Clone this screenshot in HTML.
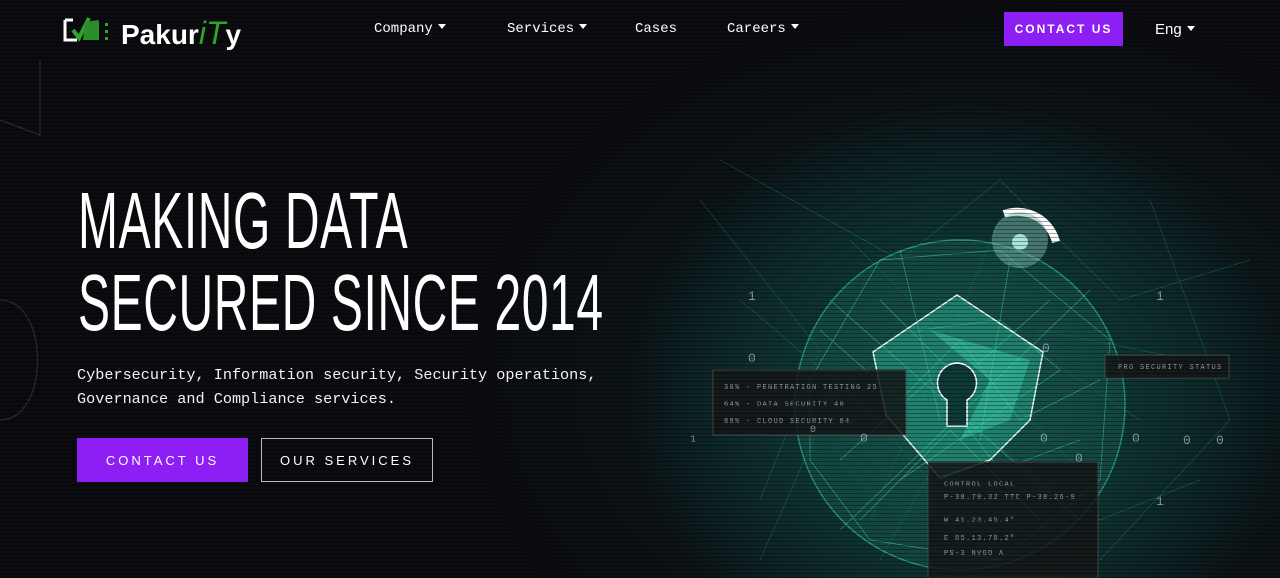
<!DOCTYPE html>
<html><head><meta charset="utf-8">
<style>
*{margin:0;padding:0;box-sizing:border-box}
body{width:1280px;height:578px;overflow:hidden;background:#0b0b10;font-family:"Liberation Sans",sans-serif;color:#fff;position:relative}
.bg{position:absolute;inset:0;background:
radial-gradient(ellipse 330px 300px at 960px 400px,#14504a 0%,#0e3532 50%,rgba(10,25,26,0) 100%),
radial-gradient(ellipse 650px 480px at 980px 380px,#0d2526 0%,rgba(11,11,16,0) 80%),#0b0b10}
.scan{position:absolute;inset:0;background:repeating-linear-gradient(0deg,rgba(0,0,0,.35) 0 1px,rgba(0,0,0,0) 1px 4px)}
.nav a{position:absolute;top:21px;font-family:"Liberation Mono",monospace;font-size:14px;color:#fff;text-decoration:none}
.car:after{content:"";display:inline-block;margin-left:5px;border-left:4px solid transparent;border-right:4px solid transparent;border-top:5px solid #fff;vertical-align:3px}
.btn{position:absolute;display:flex;align-items:center;justify-content:center;font-family:"Liberation Sans",sans-serif;font-weight:bold;letter-spacing:2.5px;color:#fff}
.h1{position:absolute;left:78px;font-size:80px;line-height:1;transform:scaleX(.6);transform-origin:left;white-space:nowrap;letter-spacing:1px}
.sub{position:absolute;left:77px;top:363px;font-family:"Liberation Mono",monospace;font-size:15.2px;line-height:24px;color:#f2f2f2}
</style></head><body>
<div class="bg"></div>
<svg width="1280" height="578" style="position:absolute;left:0;top:0">
<g stroke="#2fcfb0" stroke-opacity=".3" stroke-width=".7" fill="none">
<path d="M700 200L820 350L760 500M720 160L900 260L1000 180L1120 300L1250 260M880 560L960 420L1100 520L1200 480M800 420L960 300L1140 420M740 300L940 470L1040 330L1190 360M850 240L1080 470M1000 220L870 520M1150 200L1230 420L1100 560M760 560L840 380L1000 560"/>
</g>
<circle cx="960" cy="405" r="165" fill="#17574d" fill-opacity=".5" stroke="#3ad6b8" stroke-opacity=".55" stroke-width="1.5"/>
<g stroke="#4fe6c4" stroke-opacity=".5" stroke-width=".8" fill="none">
<path d="M820 330L900 400L960 340L1020 420L1100 380M840 460L930 380L1000 470L1080 440M880 300L960 380L1050 300M860 520L950 430L1040 520M900 250L940 420M1010 260L980 440M810 380L880 260L1000 250L1110 340L1100 480L1000 560L870 540L810 460ZM830 300L1080 520M1090 290L840 530M900 480L1060 370L1000 320L920 330"/>
</g>
<path d="M957 295L1043 352L1030 420L990 460L940 478L886 415L873 352Z" fill="#2fc9a4" fill-opacity=".4" stroke="#e8f8f2" stroke-width="1.5"/>
<path d="M930 330L990 380L960 440L1010 420L1030 360Z" fill="#4bf0c6" fill-opacity=".35"/>
<path d="M957 363a20 20 0 0 1 10 37v26h-20v-26a20 20 0 0 1 10-37z" fill="#0d3a36" stroke="#fff" stroke-width="1.5"/>
<path d="M1004 214a40 40 0 0 1 52 28" stroke="#fff" stroke-width="8" fill="none"/>
<circle cx="1020" cy="240" r="28" fill="#7bb9ad" fill-opacity=".5"/>
<circle cx="1020" cy="242" r="8" fill="#a8e6d6"/>
<g fill="#151618" fill-opacity=".85" stroke="#555" stroke-width=".8">
<rect x="713" y="370" width="193" height="65"/>
<rect x="928" y="462" width="170" height="116"/>
<rect x="1105" y="355" width="124" height="23"/>
</g>
<g font-family="Liberation Mono,monospace" font-size="7" fill="#9a9a9a" letter-spacing="1.3" xml:space="preserve">
<text x="724" y="389">38%  -  PENETRATION TESTING      25</text>
<text x="724" y="406">64%  -  DATA SECURITY            40</text>
<text x="724" y="423">88%  -  CLOUD SECURITY           64</text>
<text x="1118" y="369">PRO SECURITY STATUS</text>
<text x="944" y="486">CONTROL      LOCAL</text>
<text x="944" y="499">P-38.79.32   TTC  P-38.26-9</text>
<text x="944" y="522">W 41.23.45.4"</text>
<text x="944" y="540">E 85.13.78.2"</text>
<text x="944" y="555">PS-3 NVGO A</text>
</g>
<g font-family="Liberation Mono,monospace" font-size="13" fill="#bcd" fill-opacity=".7">
<text x="748" y="300">1</text><text x="1156" y="300">1</text><text x="1156" y="505">1</text>
<text x="748" y="362">0</text><text x="1042" y="352">0</text><text x="1040" y="442">0</text><text x="1132" y="442">0</text>
<text x="1183" y="444">0</text><text x="1216" y="444">0</text><text x="1075" y="462">0</text><text x="860" y="442">0</text>
<text x="690" y="442" font-size="10">1</text><text x="810" y="432" font-size="10">0</text>
</g>
<g stroke="#fff" stroke-opacity=".12" fill="none" stroke-width="1.5">
<path d="M40 60V135L0 120M0 300c50 0 50 120 0 120"/>
</g>
</svg>
<div class="scan"></div>
<div style="position:absolute;left:63px;top:16px;width:60px;height:30px">
<svg width="60" height="30"><path d="M2 4h8M2 4v20h12" stroke="#fff" stroke-width="3" fill="none"/><path d="M10 14l6 8 10-20" stroke="#2da52d" stroke-width="4" fill="none"/><path d="M22 6l14-2v20H20z" fill="#2a8f2a"/><rect x="42" y="7" width="3" height="3" fill="#2da52d"/><rect x="42" y="14" width="3" height="3" fill="#2da52d"/><rect x="42" y="21" width="3" height="3" fill="#2da52d"/></svg>
</div>
<div style="position:absolute;left:121px;top:15px;font-size:28px;font-weight:bold;letter-spacing:0px">Pakur<span style="color:#2da52d;font-style:italic;font-weight:normal;font-size:32px">iT</span>y</div>
<div class="nav">
<a class="car" style="left:374px">Company</a>
<a class="car" style="left:507px">Services</a>
<a style="left:635px">Cases</a>
<a class="car" style="left:727px">Careers</a>
<a class="car" style="left:1155px;font-family:'Liberation Sans',sans-serif;font-size:15px">Eng</a>
</div>
<div class="btn" style="left:1004px;top:12px;width:119px;height:34px;background:#8d1ff5;font-size:12px;letter-spacing:2px">CONTACT US</div>
<div class="h1" style="top:181px">MAKING DATA</div>
<div class="h1" style="top:263px">SECURED SINCE 2014</div>
<div class="sub">Cybersecurity, Information security, Security operations,<br>Governance and Compliance services.</div>
<div class="btn" style="left:77px;top:438px;width:171px;height:44px;background:#8d1ff5;font-size:13px;font-weight:normal;letter-spacing:3px">CONTACT US</div>
<div class="btn" style="left:261px;top:438px;width:172px;height:44px;border:1.5px solid #bbb;font-size:13px;font-weight:normal;letter-spacing:3px">OUR SERVICES</div>
</body></html>
